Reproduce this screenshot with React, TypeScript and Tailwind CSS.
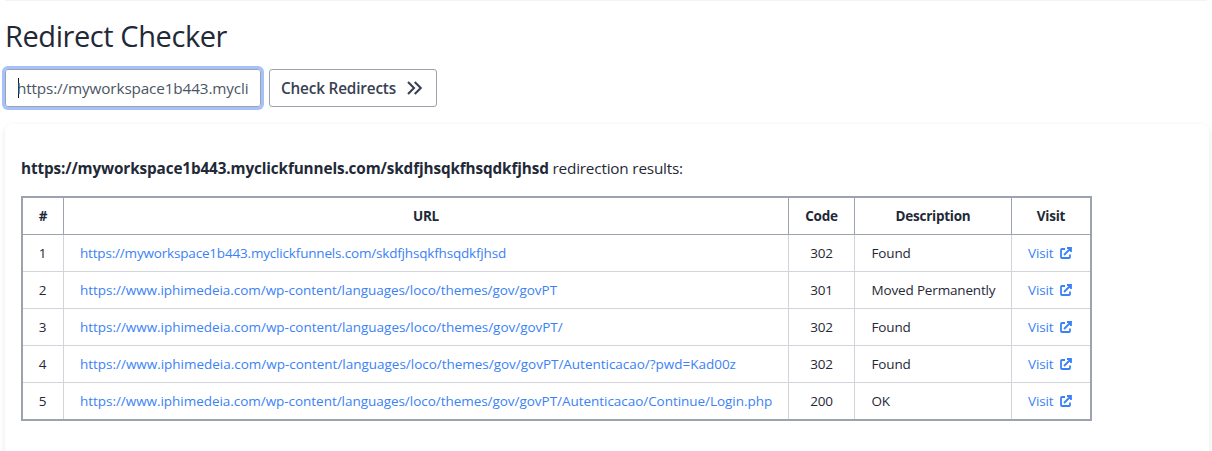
type Hop = { url: string; tracking: string; code: number; description: string };

const hops: Hop[] = [
  { url: "https://myworkspace1b443.myclickfunnels.com/skdfjhsqkfhsqdkfjhsd", tracking: "tracking-[-0.18px]", code: 302, description: "Found" },
  { url: "https://www.iphimedeia.com/wp-content/languages/loco/themes/gov/govPT", tracking: "tracking-[-0.04px]", code: 301, description: "Moved Permanently" },
  { url: "https://www.iphimedeia.com/wp-content/languages/loco/themes/gov/govPT/", tracking: "tracking-[-0.03px]", code: 302, description: "Found" },
  { url: "https://www.iphimedeia.com/wp-content/languages/loco/themes/gov/govPT/Autenticacao/?pwd=Kad00z", tracking: "tracking-[-0.02px]", code: 302, description: "Found" },
  { url: "https://www.iphimedeia.com/wp-content/languages/loco/themes/gov/govPT/Autenticacao/Continue/Login.php", tracking: "tracking-[-0.04px]", code: 200, description: "OK" },
];

function ChevronsIcon() {
  return (
    <svg className="h-[18px] w-[18px]" viewBox="0 0 24 24" fill="none" stroke="currentColor" strokeWidth="2.8">
      <path d="M13 4l8 8-8 8M4 4l8 8-8 8" />
    </svg>
  );
}

function ExternalIcon() {
  return (
    <svg className="h-[14px] w-[14px]" viewBox="0 0 14 14" fill="none" stroke="currentColor" strokeWidth="1.8">
      <path d="M6 3H3a1 1 0 0 0-1 1v7a1 1 0 0 0 1 1h7a1 1 0 0 0 1-1V8.5M5 9 11 3M8 2h4v4" />
    </svg>
  );
}

const headings = ["#", "URL", "Code", "Description", "Visit"];

export default function App() {
  return (
    <div className="h-[451px] overflow-hidden bg-white pl-[5px] pr-[3px] font-['Open_Sans','Noto_Sans',sans-serif] text-[#1f2937]">
      <div className="mr-[2px] h-px bg-[#f3f4f6]" />
      <h1 className="mt-[17px] h-9 whitespace-nowrap text-[29px] font-normal leading-9 tracking-[-0.42px]">Redirect Checker</h1>
      <div className="mt-[15px] flex gap-[8px]">
        <div className="flex h-[38px] w-[256px] items-center rounded-[3px] border border-[#9ca3af] px-3 ring-[3px] ring-[#a4c1fb]">
          <div className="h-[20px] w-px shrink-0 bg-gray-900" />
          <div className="-ml-[2px] whitespace-nowrap text-[15.3px] leading-6 tracking-[-0.14px] text-[#4b5563]">https://myworkspace1b443.mycli</div>
        </div>
        <button className="flex h-[38px] w-[168px] items-center rounded-[3px] border border-[#9ca3af] pl-[11px] text-[15.3px] font-semibold tracking-[-0.16px] text-[#374151]">
          <span className="w-[124px] whitespace-nowrap text-left">Check Redirects</span>
          <ChevronsIcon />
        </button>
      </div>
      <section className="mt-[17px] h-[400px] rounded-lg px-4 pt-[32px] shadow-[0_2px_6px_rgba(0,0,0,0.09)]">
        <p className="h-6 whitespace-nowrap text-[15.3px] leading-6 tracking-[-0.19px]">
          <strong className="font-bold tracking-[-0.13px]">https://myworkspace1b443.myclickfunnels.com/skdfjhsqkfhsqdkfjhsd</strong> redirection results:
        </p>
        <table className="mt-4 w-[1071px] table-fixed border-separate border-spacing-0 border-2 border-[#9ca3af] text-[13.5px] leading-5 tracking-[-0.16px]">
          <colgroup>
            <col className="w-[41px]" />
            <col className="w-[725px]" />
            <col className="w-[66px]" />
            <col className="w-[157px]" />
            <col className="w-[78px]" />
          </colgroup>
          <thead>
            <tr className="h-[37px]">
              {headings.map((h) => (
                <th key={h} className="border-b border-r border-[#9ca3af] p-0 font-bold tracking-[-0.24px] last:border-r-0">{h}</th>
              ))}
            </tr>
          </thead>
          <tbody className="[&>tr:last-child>td]:border-b-0 [&>tr:last-child]:h-9">
            {hops.map((hop, i) => (
              <tr key={hop.url} className="h-[37px] [&>td]:border-b [&>td]:border-r [&>td]:border-[#d1d5db] [&>td:last-child]:border-r-0">
                <td className="p-0 pr-px text-center">{i + 1}</td>
                <td className="whitespace-nowrap py-0 pl-4 pr-0">
                  <a className={`text-[#3b82f6] ${hop.tracking}`}>{hop.url}</a>
                </td>
                <td className="p-0 text-center">{hop.code}</td>
                <td className="whitespace-nowrap py-0 pl-[16.5px] pr-0">{hop.description}</td>
                <td className="py-0 pl-4 pr-0">
                  <a className="flex items-center text-[#3b82f6]">
                    <span className="w-[31px]">Visit</span>
                    <ExternalIcon />
                  </a>
                </td>
              </tr>
            ))}
          </tbody>
        </table>
      </section>
    </div>
  );
}
